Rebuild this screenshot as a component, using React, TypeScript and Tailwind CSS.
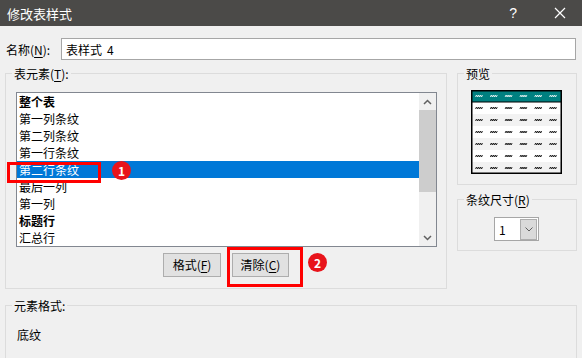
import React from "react";

const ITEMS: { label: string; bold?: boolean; selected?: boolean }[] = [
  { label: "整个表", bold: true },
  { label: "第一列条纹" },
  { label: "第二列条纹" },
  { label: "第一行条纹" },
  { label: "第二行条纹", selected: true },
  { label: "最后一列" },
  { label: "第一列" },
  { label: "标题行", bold: true },
  { label: "汇总行" },
];

function Key({ c }: { c: string }) {
  return <span className="underline underline-offset-[2px]">{c}</span>;
}

function Legend({ children }: { children: React.ReactNode }) {
  return (
    <span className="-mt-[9px] ml-[6px] self-start bg-[#f0f0f0] px-[2px] leading-[17px]">
      {children}
    </span>
  );
}

function Chevron({ up }: { up?: boolean }) {
  return (
    <svg width="9" height="6" viewBox="0 0 9 6">
      <path
        d={up ? "M1 5 L4.5 1.5 L8 5" : "M1 1 L4.5 4.5 L8 1"}
        fill="none"
        stroke="#606060"
        strokeWidth="1.5"
      />
    </svg>
  );
}

// preview picture of the table style
function Preview() {
  const cols = [8, 22.8, 37.6, 52.4, 67.2, 82];
  const rows = [0, 1, 2, 3, 4, 5, 6];
  const wave = (x: number, y: number) => {
    const pts = [];
    for (let i = 0; i <= 7; i++) pts.push(`${x - 3.5 + i},${y + (i % 2 ? -1 : 1)}`);
    return pts.join(" ");
  };
  return (
    <svg width="91" height="84" viewBox="0 0 91 84">
      {rows.map((r) => (
        <rect
          key={r}
          x="0"
          y={r * 12}
          width="91"
          height="12"
          fill={r === 0 ? "#008080" : r % 2 === 0 ? "#f2f2f2" : "#ffffff"}
        />
      ))}
      {rows.map((r) =>
        cols.map((c, i) => (
          <polyline
            key={`${r}-${i}`}
            points={wave(c, r * 12 + 6)}
            fill="none"
            stroke={r === 0 ? "#ffffff" : "#000000"}
            strokeWidth="0.8"
          />
        ))
      )}
      <line x1="0" y1="12" x2="91" y2="12" stroke="#000" strokeWidth="1" />
      <rect x="0.75" y="0.75" width="89.5" height="82.5" fill="none" stroke="#000" strokeWidth="1.5" />
    </svg>
  );
}

function Badge({ n, className }: { n: string; className: string }) {
  return (
    <div
      className={`absolute w-[19px] h-[19px] rounded-full bg-[#e8141b] text-white text-[12px] leading-[19px] text-center font-bold ${className}`}
    >
      {n}
    </div>
  );
}

export default function App() {
  return (
    <div className="relative w-[582px] h-[358px] overflow-hidden bg-[#f0f0f0] text-[12px] leading-[17px] text-black font-['Noto_Sans_CJK_SC','Noto_Sans',sans-serif] flex flex-col">
      {/* title bar */}
      <div className="h-[26px] shrink-0 bg-[#4b4a48] flex items-center text-white">
        <span className="pl-[7px] text-[13px]">修改表样式</span>
        <span className="ml-auto text-[14px] font-['Liberation_Sans',sans-serif]">?</span>
        <svg className="ml-[37px] mr-[16px]" width="12" height="12" viewBox="0 0 12 12">
          <path d="M1 1 L11 11 M11 1 L1 11" stroke="#fff" strokeWidth="1.2" />
        </svg>
      </div>

      {/* name */}
      <div className="flex items-center mt-[12px] pl-[6px] pr-[6px]">
        <span>
          名称(<Key c="N" />):
        </span>
        <div className="ml-auto w-[515px] h-[22px] border border-[#a6a6a6] bg-white px-[4px] flex items-center">
          表样式<span className="ml-[5px]">4</span>
        </div>
      </div>

      {/* middle */}
      <div className="flex mt-[13px] pl-[5px]">
        <div className="w-[442px] h-[216px] border border-[#dcdcdc] flex flex-col">
          <Legend>
            表元素(<Key c="T" />):
          </Legend>
          <div className="mt-[10px] ml-[10px] w-[421px] h-[155px] border border-[#828790] bg-white flex">
            <div className="flex-1 flex flex-col">
              {ITEMS.map((it) => (
                <div
                  key={it.label}
                  className={`h-[17px] leading-[17px] pl-[2px] ${it.bold ? "font-bold" : ""} ${
                    it.selected ? "bg-[#0078d7] text-white" : ""
                  }`}
                >
                  {it.label}
                </div>
              ))}
            </div>
            <div className="w-[17px] bg-[#f0f0f0] flex flex-col">
              <div className="h-[17px] flex items-center justify-center">
                <Chevron up />
              </div>
              <div className="h-[82px] bg-[#cdcdcd]" />
              <div className="mt-auto h-[17px] flex items-center justify-center">
                <Chevron />
              </div>
            </div>
          </div>
          <div className="mt-[6px] flex justify-center gap-[11px]">
            <button className="w-[58px] h-[24px] border border-[#adadad] bg-[#e1e1e1] leading-[22px]">
              格式(<Key c="F" />)
            </button>
            <button className="w-[57px] h-[24px] border border-[#adadad] bg-[#e1e1e1] leading-[22px]">
              清除(<Key c="C" />)
            </button>
          </div>
        </div>

        <div className="ml-[10px] flex flex-col">
          <div className="w-[120px] h-[112px] border border-[#dcdcdc] flex flex-col">
            <Legend>预览</Legend>
            <div className="mt-[8px] ml-[13px]">
              <Preview />
            </div>
          </div>
          <div className="mt-[14px] w-[120px] h-[52px] border border-[#dcdcdc] flex flex-col">
            <Legend>
              条纹尺寸(<Key c="R" />)
            </Legend>
            <div className="mt-[9px] ml-[36px] w-[45px] h-[24px] border border-[#a6a6a6] bg-white flex items-center">
              <span className="pl-[4px] flex-1">1</span>
              <div className="w-[17px] h-[21px] mr-[1px] bg-[#dadada] border border-[#adadad] flex items-center justify-center">
                <svg width="8" height="5" viewBox="0 0 8 5">
                  <path d="M0.5 0.5 L4 4 L7.5 0.5" fill="none" stroke="#606060" strokeWidth="1" />
                </svg>
              </div>
            </div>
          </div>
        </div>
      </div>

      {/* element format */}
      <div className="mt-[16px] ml-[5px] w-[572px] h-[80px] shrink-0 border border-[#dcdcdc] flex flex-col">
        <Legend>元素格式:</Legend>
        <span className="mt-[12px] ml-[11px]">底纹</span>
      </div>

      {/* annotations */}
      <div className="absolute left-[7px] top-[162px] w-[94px] h-[21px] border-[3px] border-[#ff0000]" />
      <Badge n="1" className="left-[112px] top-[161px]" />
      <div className="absolute left-[227px] top-[247px] w-[76px] h-[40px] border-[3px] border-[#ff0000]" />
      <Badge n="2" className="left-[308px] top-[253px]" />
    </div>
  );
}
